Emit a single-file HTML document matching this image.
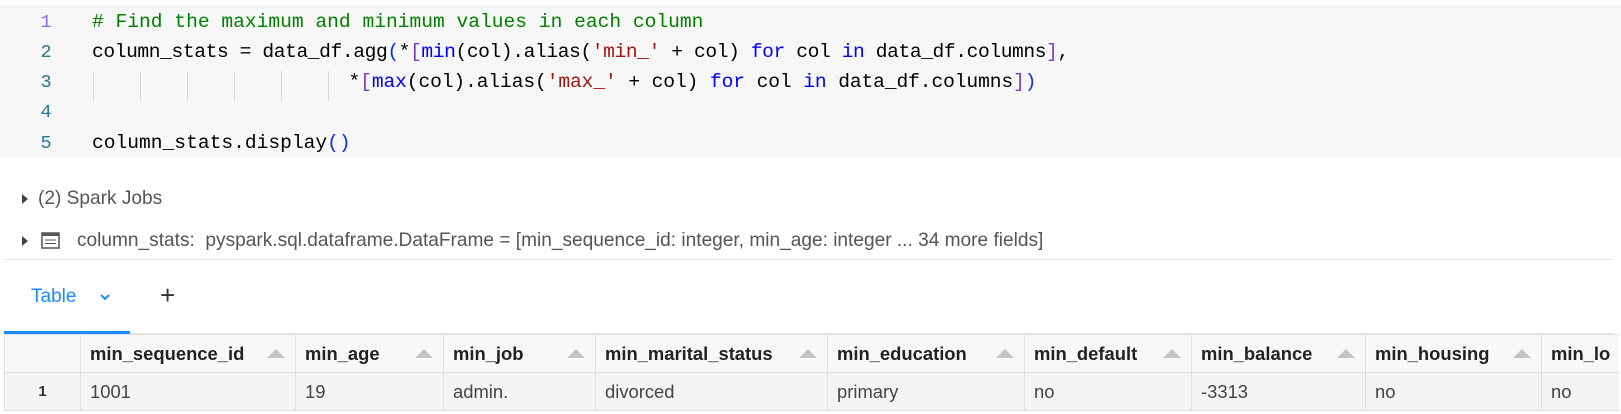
<!DOCTYPE html>
<html><head><meta charset="utf-8"><style>
body{margin:0;width:1621px;height:414px;background:#fff;overflow:hidden;position:relative;font-family:"Liberation Sans",sans-serif}
.code{position:absolute;left:0;top:5px;width:1621px;height:152px;background:#f7f7f7}
.ln{position:absolute;left:36px;width:20px;font-family:"Liberation Mono",monospace;font-size:18.5px;color:#237893;text-align:center}
.cl{position:absolute;left:92px;font-family:"Liberation Mono",monospace;font-size:19.6px;color:#000;white-space:pre}
.c{color:#008000}.k{color:#0000ff}.s{color:#a31515}.b{color:#0431fa}.p{color:#7b3fc8}
.g{position:absolute;height:30px;border-left:1px solid #d8d8d8}
.t{position:absolute;color:#555;font-size:19.1px}
.tri{position:absolute;width:0;height:0;border-top:5px solid transparent;border-bottom:5px solid transparent;border-left:6px solid #444}
table{position:absolute;left:4px;top:334px;border-collapse:collapse;font-size:18.4px;table-layout:fixed}
td,th{border:1px solid #e0e0e0;height:37px;padding:0 9px;text-align:left;color:#333;white-space:nowrap;overflow:hidden;position:relative}
th{background:#f8f8f8;font-weight:bold;color:#222}
td{background:#f4f4f4;color:#444}
.ar{position:absolute;right:10px;top:14px;width:0;height:0;border-left:9px solid transparent;border-right:9px solid transparent;border-bottom:9px solid #c4c4c4}
</style></head><body>
<div class="code">
<div class="ln" style="top:7px;color:#8c6bd6">1</div>
<div class="ln" style="top:37px">2</div>
<div class="ln" style="top:67px">3</div>
<div class="ln" style="top:97px">4</div>
<div class="ln" style="top:128px">5</div>
<div class="cl" style="top:6px"><span class="c"># Find the maximum and minimum values in each column</span></div>
<div class="cl" style="top:36px;letter-spacing:-0.4px">column_stats = data_df.agg<span class="b">(</span>*<span class="p">[</span><span class="k">min</span>(col).alias(<span class="s">'min_'</span> + col) <span class="k">for</span> col <span class="k">in</span> data_df.columns<span class="p">]</span>,</div>
<div class="cl" style="top:66px;letter-spacing:-0.1px">                      *<span class="p">[</span><span class="k">max</span>(col).alias(<span class="s">'max_'</span> + col) <span class="k">for</span> col <span class="k">in</span> data_df.columns<span class="p">]</span><span class="b">)</span></div>
<div class="cl" style="top:127px">column_stats.display<span class="b">()</span></div>
</div>
<div class="g" style="left:93px;top:71px"></div><div class="g" style="left:140px;top:71px"></div><div class="g" style="left:187px;top:71px"></div><div class="g" style="left:234px;top:71px"></div><div class="g" style="left:281px;top:71px"></div><div class="g" style="left:328px;top:71px"></div>
<div class="tri" style="left:22px;top:194px"></div>
<div class="t" style="left:38px;top:188px">(2) Spark Jobs</div>
<div class="tri" style="left:22px;top:236px"></div>
<svg style="position:absolute;left:41px;top:232px" width="19" height="17"><rect x="1" y="1" width="17" height="15" fill="none" stroke="#555" stroke-width="1.5"/><rect x="1" y="1" width="17" height="3" fill="#555"/><line x1="4" y1="8" x2="15" y2="8" stroke="#555"/><line x1="4" y1="11.5" x2="15" y2="11.5" stroke="#555"/></svg>
<div class="t" style="left:77px;top:230px">column_stats:&nbsp; pyspark.sql.dataframe.DataFrame = [min_sequence_id: integer, min_age: integer ... 34 more fields]</div>
<div style="position:absolute;left:4px;top:259px;width:1609px;border-top:1px solid #e6e6e6"></div>
<div style="position:absolute;left:31px;top:286px;color:#1a8cff;font-size:19px">Table</div>
<svg style="position:absolute;left:99px;top:293px" width="12" height="8"><path d="M2 2L6 6L10 2" fill="none" stroke="#1a8cff" stroke-width="2"/></svg>
<div style="position:absolute;left:160px;top:280px;font-size:26px;color:#333">+</div>
<div style="position:absolute;left:4px;top:333px;width:1609px;border-top:1px solid #e6e6e6"></div>
<div style="position:absolute;left:4px;top:331px;width:126px;height:3px;background:#1a8cff"></div>
<table>
<colgroup><col style="width:76px"><col style="width:215px"><col style="width:148px"><col style="width:152px"><col style="width:232px"><col style="width:197px"><col style="width:167px"><col style="width:174px"><col style="width:176px"><col style="width:72px"></colgroup>
<tr><th></th><th>min_sequence_id<span class="ar"></span></th><th>min_age<span class="ar"></span></th><th>min_job<span class="ar"></span></th><th>min_marital_status<span class="ar"></span></th><th>min_education<span class="ar"></span></th><th>min_default<span class="ar"></span></th><th>min_balance<span class="ar"></span></th><th>min_housing<span class="ar"></span></th><th style="border-right:none">min_lo</th></tr>
<tr><td style="text-align:center;font-weight:bold;font-size:15px;color:#333">1</td><td>1001</td><td>19</td><td>admin.</td><td>divorced</td><td>primary</td><td>no</td><td>-3313</td><td>no</td><td style="border-right:none">no</td></tr>
</table>
</body></html>
